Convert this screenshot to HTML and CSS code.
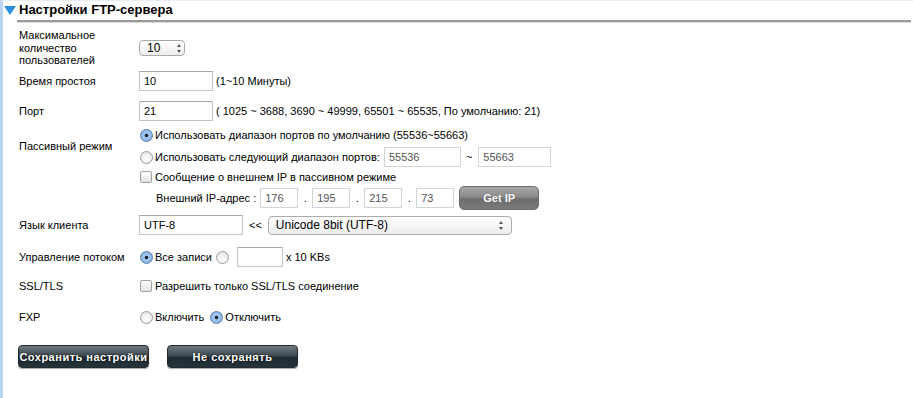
FILE: index.html
```html
<!DOCTYPE html>
<html>
<head>
	<meta charset="UTF-8">
	<title>Настройки FTP-сервера</title>
	<link rel="stylesheet" href="styles.css">
</head>
<body>
	<div class="frame">
		<h2 class="heading"><span class="arrow"></span>Настройки FTP-сервера</h2>

		<div class="form">
			<div class="row row-users">
				<div class="label">Максимальное<br>количество<br>пользователей</div>
				<div class="field">
					<span class="mini-select">10 <span class="updown"></span></span>
				</div>
			</div>

			<div class="row row-idle">
				<div class="label">Время простоя</div>
				<div class="field">
					<span class="text-box w73">10</span>
					<span class="note">(1~10 Минуты)</span>
				</div>
			</div>

			<div class="row row-port">
				<div class="label">Порт</div>
				<div class="field">
					<span class="text-box w73">21</span>
					<span class="note">( 1025 ~ 3688, 3690 ~ 49999, 65501 ~ 65535, По умолчанию: 21)</span>
				</div>
			</div>

			<div class="row row-passive">
				<div class="label label-passive">Пассивный режим</div>
				<div class="field stack">
					<div class="line l-def">
						<span class="radio on"></span>Использовать диапазон портов по умолчанию (55536~55663)
					</div>
					<div class="line l-range">
						<span class="radio"></span>Использовать следующий диапазон портов:
						<span class="text-box w76 dim ml-range">55536</span>
						<span class="tilde">~</span>
						<span class="text-box w72 dim">55663</span>
					</div>
					<div class="line l-ext">
						<span class="check"></span>Сообщение о внешнем IP в пассивном режиме
					</div>
					<div class="line l-ip">
						<span class="ip-label">Внешний IP-адрес :</span>
						<span class="text-box w38 dim">176</span><span class="dot">.</span>
						<span class="text-box w38 dim">195</span><span class="dot">.</span>
						<span class="text-box w38 dim">215</span><span class="dot">.</span>
						<span class="text-box w38 dim">73</span>
						<button class="btn-gray">Get IP</button>
					</div>
				</div>
			</div>

			<div class="row row-lang">
				<div class="label">Язык клиента</div>
				<div class="field">
					<span class="text-box w103">UTF-8</span>
					<span class="arrows">&lt;&lt;</span>
					<span class="select-box">Unicode 8bit (UTF-8)<span class="updown"></span></span>
				</div>
			</div>

			<div class="row row-flow">
				<div class="label">Управление потоком</div>
				<div class="field">
					<span class="radio on"></span>Все записи
					<span class="radio ml-r"></span>
					<span class="text-box w45"></span>
					<span class="note">x 10 KBs</span>
				</div>
			</div>

			<div class="row row-ssl">
				<div class="label">SSL/TLS</div>
				<div class="field">
					<span class="check"></span>Разрешить только SSL/TLS соединение
				</div>
			</div>

			<div class="row row-fxp">
				<div class="label">FXP</div>
				<div class="field">
					<span class="radio"></span>Включить
					<span class="radio on ml-r2"></span>Отключить
				</div>
			</div>
		</div>

		<div class="actions">
			<button class="btn-dark">Сохранить настройки</button>
			<button class="btn-dark">Не сохранять</button>
		</div>
	</div>
</body>
</html>
```

FILE: styles.css
```css
body {
	margin: 0;
	padding: 0;
	background-color: #ffffff;
	font-family: "Liberation Sans", Arial, sans-serif;
	font-size: 11px;
	color: #000000;
}
.frame {
	height: 398px;
	box-sizing: border-box;
	border-left: 3px solid #b9d5f2;
	border-top: 1px solid #e6eef8;
	padding-right: 2px;
}
.heading {
	margin: 0 0 0 14px;
	padding: 2px 0 3px 0;
	height: 14px;
	font-size: 13px;
	font-weight: bold;
	line-height: 14px;
	border-bottom: 2px solid #9a9a9a;
	box-shadow: 0 1px 0 #dcdcdc;
	display: flex;
	align-items: center;
}
.arrow {
	width: 0;
	height: 0;
	margin-left: -13px;
	margin-right: 3px;
	border-left: 6px solid transparent;
	border-right: 6px solid transparent;
	border-top: 9px solid #2b8fe0;
}
.form {
	padding-left: 16px;
	padding-top: 7px;
}
.row {
	display: flex;
	align-items: center;
}
.label {
	width: 120px;
	flex-shrink: 0;
	line-height: 12.5px;
}
.field {
	display: flex;
	align-items: center;
	white-space: nowrap;
}
.field.stack {
	flex-direction: column;
	align-items: flex-start;
}
.line {
	display: flex;
	align-items: center;
}
.row-users { height: 38px; }
.row-idle { height: 20px; margin-top: 4px; }
.row-port { height: 20px; margin-top: 10px; }
.row-passive { margin-top: 4px; align-items: flex-start; }
.label-passive { padding-top: 15px; }
.l-def { height: 20px; }
.l-range { height: 20px; margin-top: 2px; }
.l-ext { height: 19px; }
.l-ip { height: 24px; margin-left: 17px; }
.row-lang { height: 20px; margin-top: 5px; }
.row-flow { height: 20px; margin-top: 12px; }
.row-ssl { height: 20px; margin-top: 9px; }
.row-fxp { height: 20px; margin-top: 11px; }

.text-box {
	display: inline-block;
	box-sizing: border-box;
	height: 20px;
	line-height: 18px;
	padding: 0 4px;
	border: 1px solid #c4c4c4;
	border-top-color: #a8a8a8;
	background: #ffffff;
	color: #000000;
}
.text-box.dim { color: #555555; border-color: #d4d4d4; }
.w73 { width: 74px; }
.w76 { width: 77px; }
.w72 { width: 73px; }
.w38 { width: 38px; }
.w103 { width: 104px; }
.w45 { width: 46px; }
.note { margin-left: 3px; }
.ml-range { margin-left: 4px; }
.tilde { margin: 0 6px 0 5px; }
.dot { width: 14px; text-align: center; }
.ip-label { margin-right: 4px; }
.arrows { margin: 0 6px; }

.mini-select {
	display: inline-flex;
	align-items: center;
	box-sizing: border-box;
	width: 46px;
	height: 16px;
	padding-left: 7px;
	border: 1px solid #a9a9a9;
	border-radius: 4px;
	background: linear-gradient(#ffffff, #eeeeee);
	font-size: 12px;
}
.select-box {
	display: inline-flex;
	align-items: center;
	justify-content: space-between;
	box-sizing: border-box;
	width: 244px;
	height: 19px;
	padding: 0 5px 0 7px;
	border: 1px solid #ababab;
	border-radius: 4px;
	background: linear-gradient(#ffffff, #ececec);
	font-size: 12px;
}
.updown {
	position: relative;
	width: 5px;
	height: 9px;
	margin-left: auto;
	margin-right: 2px;
}
.updown::before,
.updown::after {
	content: "";
	position: absolute;
	left: 0;
	border-left: 2.5px solid transparent;
	border-right: 2.5px solid transparent;
}
.updown::before { top: 0; border-bottom: 3px solid #555555; }
.updown::after { bottom: 0; border-top: 3px solid #555555; }

.radio {
	display: inline-block;
	box-sizing: border-box;
	width: 13px;
	height: 13px;
	margin: 0 2px 0 1px;
	border-radius: 50%;
	border: 1px solid #9a9a9a;
	background: radial-gradient(circle at 50% 70%, #ffffff, #dedede);
	flex-shrink: 0;
}
.radio.on {
	border-color: #5a7da8;
	background: radial-gradient(circle, #1c2a3a 0, #1c2a3a 1.6px, #a9cdf2 2.2px, #6ea3dc 100%);
}
.ml-r { margin-left: 4px; margin-right: 8px; }
.ml-r2 { margin-left: 6px; }
.check {
	display: inline-block;
	box-sizing: border-box;
	width: 12px;
	height: 12px;
	margin: 0 3px 0 1px;
	border: 1px solid #a0a0a0;
	border-radius: 2px;
	background: linear-gradient(#ffffff, #e2e2e2);
	flex-shrink: 0;
}

.btn-gray {
	margin-left: 5px;
	width: 80px;
	height: 24px;
	border: 1px solid #6e6e6e;
	border-radius: 5px;
	background: linear-gradient(#a8a8a8 0%, #8a8a8a 45%, #6e6e6e 55%, #7a7a7a 100%);
	color: #ffffff;
	font-family: "Liberation Sans", Arial, sans-serif;
	font-size: 11px;
	font-weight: bold;
	text-shadow: 0 0 1px #555555;
	padding: 0;
}
.actions {
	display: flex;
	gap: 18px;
	padding-left: 15px;
	margin-top: 18px;
}
.btn-dark {
	width: 131px;
	height: 23px;
	padding: 0;
	border: 1px solid #222a30;
	border-radius: 4px;
	background: linear-gradient(#6e7a82 0%, #3f4a52 45%, #1f2a31 55%, #26333b 100%);
	color: #ffffff;
	font-family: "Liberation Sans", Arial, sans-serif;
	font-size: 11px;
	font-weight: bold;
	letter-spacing: 0.5px;
	text-shadow: 0 0 2px #000000;
	box-shadow: 0 1px 1px rgba(0, 0, 0, 0.35);
}
```
